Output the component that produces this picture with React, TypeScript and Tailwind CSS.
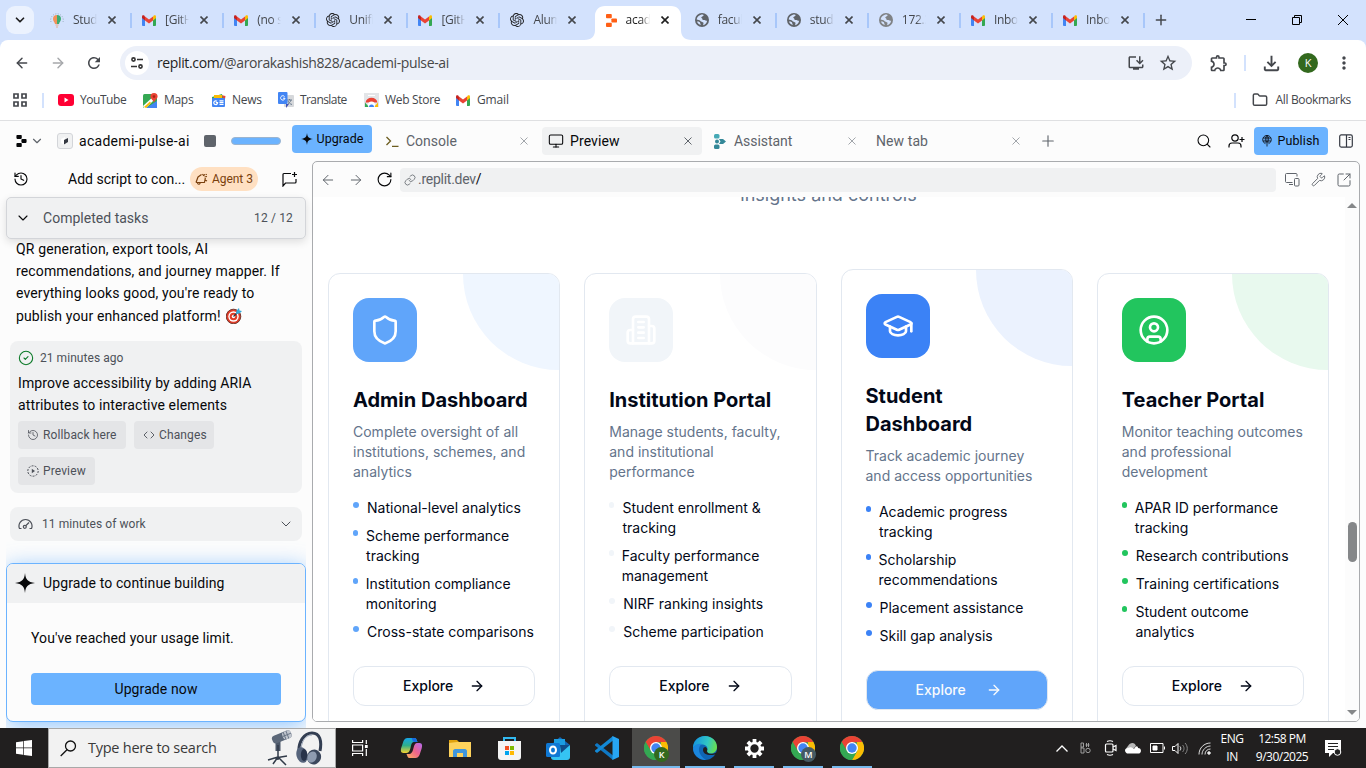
import React from "react";
import {
  ArrowLeft, ArrowRight, ChevronDown, CircleCheck, CircleUser, Code,
  Folder, GraduationCap, History, Link, Monitor, Plus, RotateCw, Search, Shield, SquareArrowOutUpRight,
  Wrench,
} from "lucide-react";
import { SiOpenai } from "react-icons/si";
import { MdOutlineFileDownload, MdStarBorder, MdOutlineExtension, MdOutlineInstallDesktop, MdRefresh, MdMoreVert } from "react-icons/md";

const SEGOE = "font-['Open_Sans',sans-serif]";
const PLEX = "font-['Roboto',sans-serif]";
const INTER = "font-['Inter',sans-serif]";

function Gmail() {
  return (
    <svg className="h-[11px] w-[14px] shrink-0" viewBox="0 0 28 22">
      <path fill="#4285f4" d="M0 5v15c0 1 1 2 2 2h4V10z" />
      <path fill="#34a853" d="M28 5v15c0 1-1 2-2 2h-4V10z" />
      <path fill="#fbbc04" d="M22 3v8l6-5V3c0-3-4-4-6 0z" />
      <path fill="#c5221f" d="M0 3v3l6 5V3C4-1 0 0 0 3z" />
      <path fill="#ea4335" d="M6 3l8 6 8-6v8l-8 6-8-6z" />
    </svg>
  );
}

function WorldIcon({ dim = false }: { dim?: boolean }) {
  return (
    <svg className="h-[14px] w-[14px] shrink-0" viewBox="0 0 14 14">
      <circle cx="7" cy="7" r="7" fill={dim ? "#7f8285" : "#5f6368"} />
      <path fill="#d3e2fd" d="M7.6 1.6c1 .1 1.3 1 .6 1.5-.7.6-1.8.6-1.9 1.4-.1.8 1.3.8 1.2 1.9 0 .8 1.3.5 2 .5 1 0 1.2 1 2.6.8-.2 2-1.700 4-3.700 4.500-.6-1 .6-1.600-.1-2.600C7.600 8.700 6 9 5.200 7.700 4.500 6.700 3 7 1.700 6.400 2 4 4.500 1.600 7.600 1.600z" />
      <path fill="#d3e2fd" d="M2 8.600c1.500-.2 3 .3 3.200 1.500.1.900.3 1.300.8 1.900-2-.2-3.500-1.600-4-3.400z" />
    </svg>
  );
}

function Bulb() {
  return (
    <svg className="h-[16px] w-[14px] shrink-0" viewBox="0 0 14 16">
      <path fill="#f2925a" d="M7 3a4 4 0 0 0-4 4c0 2 1.500 2.700 2 5h2z" />
      <path fill="#3cab72" d="M7 3a4 4 0 0 1 4 4c0 2-1.500 2.700-2 5H7z" />
      <path stroke="#e7a98c" d="M5.500 13h3M6 15h2" />
      <path stroke="#8fa3b5" strokeWidth=".9" strokeDasharray="1 1.500" fill="none" d="M1 10a6.300 6.300 0 1 1 12 0" />
    </svg>
  );
}

function Replit({ color = "#ff5f15", size = "h-[13px] w-[11px]" }: { color?: string; size?: string }) {
  return (
    <svg className={size + " shrink-0"} viewBox="0 0 11 13" fill={color}>
      <rect x="0" y="0" width="5.800" height="4.200" rx=".9" />
      <rect x="5.400" y="4.400" width="5.600" height="4.200" rx=".9" />
      <rect x="0" y="8.800" width="5.800" height="4.200" rx=".9" />
    </svg>
  );
}

function ChromeLogo() {
  return (
    <svg className="h-6 w-6" viewBox="0 0 24 24">
      <circle cx="12" cy="12" r="12" fill="#34a853" />
      <path fill="#ea4335" d="M1.600 6A12 12 0 0 1 22.400 6L12 6.500 7 15z" />
      <path fill="#fbbc04" d="M22.400 6A12 12 0 0 1 12 24l5.200-9L17 6z" />
      <path fill="#34a853" d="M1.600 6l5.200 9 10.400 0L12 24A12 12 0 0 1 1.600 6z" />
      <circle cx="12" cy="12" r="6" fill="#fff" />
      <circle cx="12" cy="12" r="4.700" fill="#4285f4" />
    </svg>
  );
}

function Spark({ className }: { className: string }) {
  return (
    <svg className={className} viewBox="0 0 20 20" fill="currentColor">
      <path d="M10 0c.7 6.500 2.500 9 10 10-7.500 1-9.300 3.500-10 10-.7-6.500-2.500-9-10-10 7.500-1 9.300-3.500 10-10z" />
    </svg>
  );
}

function TabClose({ className }: { className: string }) {
  return <svg className={"ml-auto h-2 w-2 " + className} viewBox="0 0 8 8"><path stroke="currentColor" d="M.5.5l7 7M7.500.5l-7 7" /></svg>;
}

function OfficeBuilding() {
  return (
    <svg className="h-8 w-8" viewBox="0 0 24 24" fill="none" stroke="currentColor" strokeWidth="2" strokeLinecap="round" strokeLinejoin="round">
      <path d="M6 22V4a2 2 0 0 1 2-2h8a2 2 0 0 1 2 2v18Z" />
      <path d="M6 12H4a2 2 0 0 0-2 2v6a2 2 0 0 0 2 2h2M18 9h2a2 2 0 0 1 2 2v9a2 2 0 0 1-2 2h-2M10 6h4M10 10h4M10 14h4M10 18h4" />
    </svg>
  );
}

type BTab = { icon: React.ReactNode; label: string; sep?: boolean; active?: boolean };
const browserTabs: BTab[] = [
  { icon: <Bulb />, label: "Stude" },
  { icon: <Gmail />, label: "[GitHu", sep: true },
  { icon: <Gmail />, label: "(no su", sep: true },
  { icon: <SiOpenai className="h-[14px] w-[14px] shrink-0 text-[#202124]" />, label: "Unifi", sep: true },
  { icon: <Gmail />, label: "[GitHu", sep: true },
  { icon: <SiOpenai className="h-[14px] w-[14px] shrink-0 text-[#202124]" />, label: "Alum", sep: true },
  { icon: <div className="pl-[3px]"><Replit /></div>, label: "acad", active: true },
  { icon: <WorldIcon />, label: "facul" },
  { icon: <WorldIcon />, label: "stude", sep: true },
  { icon: <WorldIcon dim />, label: "172.3", sep: true },
  { icon: <Gmail />, label: "Inbox", sep: true },
  { icon: <Gmail />, label: "Inbox", sep: true },
];

function BrowserTab({ icon, label, sep, active }: BTab) {
  return (
    <div className="relative flex h-10 w-[92.1px] shrink-0 items-center pl-3">
      {sep && <div className="absolute left-0 top-[13px] h-[15px] w-[2px] bg-[#a8c7fa]" />}
      {active && (
        <svg className="absolute -left-[7px] top-[6px] h-[34px] w-[108px]" viewBox="0 0 108 34" fill="#fff">
          <path d="M0 34c8 0 11-4 11-10V10C11 4 15 0 21 0h66c6 0 10 4 10 10v14c0 6 3 10 11 10z" />
        </svg>
      )}
      <div className="relative flex w-[14px] justify-center">{icon}</div>
      <div className={"relative -mr-px ml-[9px] w-[24px] overflow-hidden whitespace-nowrap text-[12px] tracking-[-0.3px] [mask-image:linear-gradient(to_right,#000_60%,transparent)] " + (active ? "text-[#1f1f1f]" : "text-[#44474c]")}>{label}</div>
      <svg className={"relative ml-[12px] h-[8px] w-[8px] " + (active ? "text-[#1f1f1f]" : "text-[#44474c]")} viewBox="0 0 8 8"><path stroke="currentColor" strokeWidth="1.600" d="M.5.5l7 7M7.500.5l-7 7" /></svg>
    </div>
  );
}

function BrowserChrome() {
  return (
    <header className={"shrink-0 bg-[#d3e2fd] " + SEGOE}>
      <div className="flex h-10 items-center">
        <div className="ml-[6px] flex h-7 w-7 items-center justify-center rounded-[9px] bg-[#ebf2fe]">
          <ChevronDown className="h-[14px] w-[14px] text-[#1f1f1f]" strokeWidth={3} />
        </div>
        <div className="ml-[4px] flex">
          {browserTabs.map((t, i) => <BrowserTab key={i} {...t} />)}
        </div>
        <div className="h-[15px] w-[2px] bg-[#a8c7fa]" />
        <Plus className="ml-[8px] h-4 w-4 text-[#44474c]" strokeWidth={2.2} />
        <div className="ml-auto flex items-center gap-[34px] pr-[17px] text-black">
          <svg className="h-3 w-3" viewBox="0 0 12 12"><path stroke="currentColor" d="M1 5.500h10" /></svg>
          <svg className="h-3 w-3" viewBox="0 0 12 12" fill="none" stroke="currentColor"><path d="M1.500 3.500h7v7h-7zM3.500 3.500v-2h7v7h-2" /></svg>
          <svg className="h-3 w-3" viewBox="0 0 12 12"><path stroke="currentColor" d="M1 1l10 10M11 1L1 11" /></svg>
        </div>
      </div>
      <div className="rounded-t-[8px] bg-white">
        <div className="flex h-[46px] items-center text-[#44474c]">
          <ArrowLeft className="ml-[14px] h-4 w-4" strokeWidth={2.2} />
          <ArrowRight className="ml-[20px] h-4 w-4 text-[#a6a8ab]" strokeWidth={2.2} />
          <MdRefresh className="ml-[19px] h-[18px] w-[18px]" />
          <div className="ml-[17px] flex h-[34px] w-[1072px] items-center rounded-full bg-[#ecf0f9] pl-[5px]">
            <div className="flex h-6 w-6 items-center justify-center rounded-full bg-white">
              <svg className="h-[12px] w-[12px]" viewBox="0 0 12 12" fill="none" stroke="#333" strokeWidth="1.600"><circle cx="2.500" cy="2.500" r="1.600" /><path d="M6 2.500h6M0 9.500h6" /><circle cx="9.500" cy="9.500" r="1.600" /></svg>
            </div>
            <div className="-mt-px ml-[8px] whitespace-nowrap text-[14px] tracking-[-0.37px] text-[#474747]"><span className="text-[#1f1f1f]">replit.com</span>/@arorakashish828/academi-pulse-ai</div>
            <MdOutlineInstallDesktop className="ml-auto h-[18px] w-[18px]" />
            <MdStarBorder className="ml-[13px] mr-[14px] h-[20px] w-[20px]" />
          </div>
          <MdOutlineExtension className="ml-[17px] h-[20px] w-[20px]" />
          <div className="ml-[15px] h-4 w-[2px] bg-[#d3e2fd]" />
          <MdOutlineFileDownload className="ml-[14px] h-[23px] w-[23px]" />
          <div className="ml-[15px] flex h-5 w-5 items-center justify-center rounded-full bg-[#33691e] text-[11px] text-white">K</div>
          <MdMoreVert className="ml-[16px] h-[20px] w-[20px]" />
        </div>
        <div className="flex h-[34px] items-center pb-[6px] text-[12px] tracking-[-0.15px] text-[#44474c]">
          <svg className="ml-[13px] h-[14px] w-[14px]" viewBox="0 0 14 14" fill="none" stroke="currentColor" strokeWidth="1.700"><path d="M1 1h4v4H1zM9 1h4v4H9zM1 9h4v4H1zM9 9h4v4H9z" /></svg>
          <div className="ml-[15px] mr-[14px] h-[15px] w-[2px] bg-[#d3e2fd]" />
          <div className="flex w-[85px] items-center gap-[6px] tracking-[-0.45px]">
            <svg className="h-3 w-4" viewBox="0 0 16 12"><rect width="16" height="12" rx="3" fill="#f03" /><path fill="#fff" d="M6.500 3.500v5l4-2.500z" /></svg><span>YouTube</span>
          </div>
          <div className="flex w-[68px] items-center gap-[6px] tracking-[-0.3px]">
            <svg className="h-[15px] w-[15px]" viewBox="0 0 15 15"><rect y="1" width="14" height="14" rx="1.500" fill="#34a853" /><path fill="#4285f4" d="M14 8v7H3z" /><path fill="#fff" d="M0 13L12 2l2 2L3 15H1z" /><path fill="#fbbc04" d="M1 14l6-5.500L8 10l-5 5z" /><path fill="#ea4335" d="M11 0a3.600 3.600 0 0 1 3.600 3.600C14.600 6 11.500 7 11 10 10.500 7 7.400 6 7.400 3.600A3.600 3.600 0 0 1 11 0z" /><circle cx="11" cy="3.600" r="1.300" fill="#a52714" /></svg><span>Maps</span>
          </div>
          <div className="flex w-[67px] items-center gap-[6px] tracking-[-0.3px]">
            <svg className="h-[15px] w-[15px]" viewBox="0 0 15 15"><path fill="#ea4335" d="M10 2l4.500 1-1 6H8z" /><path fill="#34a853" d="M1 4l10-3 1 5H1z" /><path fill="#fbbc04" d="M3 2h8v6H3z" /><rect x="1" y="5" width="13" height="9" rx="1" fill="#4285f4" /><path stroke="#fff" strokeWidth="1.200" fill="none" d="M6 8.300a1.900 1.900 0 1 0 .6 1.400H4.800M8.500 7.800h4M8.500 9.700h4M8.500 11.500h4" /></svg><span>News</span>
          </div>
          <div className="flex w-[86px] items-center gap-[6px]">
            <svg className="h-4 w-4" viewBox="0 0 16 16"><rect x="6" y="3" width="10" height="12" rx="1" fill="#d6d8db" /><path fill="none" stroke="#6b7d91" d="M9 8h5M11.500 7v1M13 8c-.5 2-2 3-3 4M10 9c1 2 2 3 4 3.500" /><path fill="#3f51b5" d="M8 12l3 0-3 4z" /><rect width="9.500" height="12" rx="1" fill="#4285f4" /><path stroke="#fff" fill="none" d="M6.500 4.500A2.200 2.200 0 1 0 7 6.200H5" /></svg><span className="tracking-[-0.580px]">Translate</span>
          </div>
          <div className="flex w-[92px] items-center gap-[6px] tracking-[-0.3px]">
            <svg className="h-[15px] w-[15px]" viewBox="0 0 15 15"><path fill="#e3e5e8" d="M0 0h15v14H0z" /><path fill="#fff" d="M4 2h7v1H4z" /><path fill="#ea4335" d="M1.500 9.500a6.200 6.200 0 0 1 12 0z" /><path fill="#34a853" d="M1 9.500l4 4.500H1z" /><path fill="#fbbc04" d="M14 9.500L10 14h4z" /><circle cx="7.500" cy="12" r="3.500" fill="#fff" /><path fill="#4285f4" d="M5 14a2.500 2.500 0 0 1 5 0z" /></svg><span>Web Store</span>
          </div>
          <div className="flex items-center gap-[7px]"><Gmail /><span>Gmail</span></div>
          <div className="ml-auto mr-[16px] h-[15px] w-[2px] bg-[#d3e2fd]" />
          <Folder className="h-4 w-4" strokeWidth={2.200} />
          <span className="ml-[8px] mr-[15px] tracking-[-0.35px]">All Bookmarks</span>
        </div>
      </div>
    </header>
  );
}

function WorkspaceTabs() {
  return (
    <div className={"flex h-10 shrink-0 items-center text-[14px] text-[#5f646b] " + PLEX}>
      <div className="ml-[16px]"><Replit color="#07080a" size="h-[12px] w-[11px]" /></div>
      <ChevronDown className="ml-[3px] h-[14px] w-[14px]" />
      <div className="ml-[13px] flex h-4 w-4 items-center justify-center rounded-[3px] border border-[#d3d5d9] bg-[#f0f1f2]">
        <svg className="h-[8px] w-[8px]" viewBox="0 0 8 8"><path fill="#fff" d="M0 2l4-2v8L0 6z" /><path fill="#353942" d="M3 3l4-2v4L3 7.500z" /></svg>
      </div>
      <div className="ml-[6px] w-[125px] whitespace-nowrap tracking-[0.290px] text-[#07080a]">academi-pulse-ai</div>
      <div className="h-3 w-3 rounded-[2px] bg-[#5f646b]" />
      <div className="ml-[15px] h-2 w-[50px] rounded-full border border-[#9bb4cf] bg-[#6bb3ff]" />
      <div className="-mt-1 ml-[11px] flex h-7 w-20 items-center justify-center gap-[4px] rounded-[4px] bg-[#6bb3ff] text-[12.500px] tracking-[0.040px] text-[#07080a]">
        <Spark className="h-3 w-3" />Upgrade
      </div>
      <div className="ml-[14px] flex w-[156px] items-center">
        <svg className="h-[11px] w-[13px]" viewBox="0 0 13 11" fill="none" stroke="#6b5c1e" strokeWidth="1.300"><path d="M.5 1l4 4-4 4M6 10.300h6.500" /></svg>
        <span className="ml-[7px] tracking-[0px]">Console</span>
        <TabClose className="mr-[14px] text-[#a2a6ab]" />
      </div>
      <div className="flex h-7 w-[160px] items-center rounded-[4px] bg-[#f0f1f2] text-[#07080a]">
        <Monitor className="ml-[6px] h-4 w-4" strokeWidth={1.600} />
        <span className="ml-[6px] tracking-[0.1px]">Preview</span>
        <TabClose className="mr-[10px] text-[#5f646b]" />
      </div>
      <div className="ml-[12px] flex w-[162px] items-center">
        <svg className="h-[15px] w-[12px]" viewBox="0 0 12 15" fill="#348898"><rect x="0" y="0" width="5.500" height="4.500" rx="1.500" fill="#46a9b5" /><circle cx="3" cy="7.500" r="2" /><path d="M5 5h4l3 2.500L9 10H5l1.500-2.500z" /><rect x="0" y="10.500" width="5.500" height="4.500" rx="1.500" /></svg>
        <span className="ml-[8px] tracking-[-0.050px]">Assistant</span>
        <TabClose className="mr-[20px] text-[#a2a6ab]" />
      </div>
      <div className="flex w-[156px] items-center">
        <span className="tracking-[0.080px]">New tab</span>
        <TabClose className="mr-[12px] text-[#a2a6ab]" />
      </div>
      <Plus className="ml-[7px] h-[18px] w-[18px]" strokeWidth={1.500} />
      <Search className="ml-auto h-4 w-4 text-[#07080a]" strokeWidth={1.600} />
      <svg className="ml-4 h-4 w-[17px] text-[#07080a]" viewBox="0 0 17 16" fill="none" stroke="currentColor" strokeWidth="1.200"><circle cx="7" cy="5" r="3.200" /><path d="M1 14.500v-1.500c0-2 1-3 3-3h6c2 0 3 1 3 3v1.500M14 4v5M11.500 6.500h5" /></svg>
      <div className="ml-[9px] flex h-7 w-[74px] items-center justify-center gap-[5px] rounded-[4px] bg-[#6bb3ff] text-[12.500px] tracking-[0.120px] text-[#07080a]">
        <svg className="h-[12px] w-[10px]" viewBox="0 0 10 12" fill="none" stroke="currentColor" strokeWidth=".8"><path d="M3.500 8.700A4.300 4.300 0 1 1 6.500 8.700M1 3h8M1 6h8M5 .5v11M5 .5C3 2 3 5.500 3.700 6.500M5 .5c2 1.500 2 5 1.300 6M3.500 8L5 6.300 6.500 8" /></svg>Publish
      </div>
      <svg className="ml-[11px] mr-[13px] h-[14px] w-[14px]" viewBox="0 0 14 14" fill="none" stroke="#353942" strokeWidth="1.200"><rect x=".7" y=".9" width="12.600" height="12.200" rx="1.500" /><path d="M7.500 1v12M9.500 3.500h2M9.500 5.500h2" /></svg>
    </div>
  );
}

function SmallButton({ icon, children, className }: { icon: React.ReactNode; children: string; className: string }) {
  return <div className={"flex h-7 items-center gap-[4px] rounded-[4px] bg-[#e4e5e7] pl-[9px] text-[12px] tracking-[0.120px] text-[#4d5159] " + className}>{icon}{children}</div>;
}

function Target() {
  return (
    <svg className="ml-[5px] inline-block h-[16px] w-[16px] align-[-3px]" viewBox="0 0 16 16">
      <circle cx="7.500" cy="8.500" r="7.300" fill="#e03c28" stroke="#54231c" strokeWidth=".8" /><circle cx="7.500" cy="8.500" r="5.200" fill="#fff" /><circle cx="7.500" cy="8.500" r="3.800" fill="#e03c28" /><circle cx="7.500" cy="8.500" r="1.700" fill="#fff" />
      <path stroke="#243642" strokeWidth="1.200" d="M7.500 8.500L13 3" /><path fill="#35a9d8" d="M10 6l.5-3.500L13 0l.5 2.500L16 3l-2.500 2.500z" />
    </svg>
  );
}

function AgentPanel() {
  return (
    <aside className={"flex w-[312px] shrink-0 flex-col pl-[6px] pr-[6px] text-[#07080a] " + PLEX}>
      <div className="flex h-9 items-center">
        <History className="ml-[7px] h-4 w-4" strokeWidth={1.700} />
        <span className="ml-[39px] w-[122px] whitespace-nowrap text-[14px] tracking-[0.010px]">Add script to con...</span>
        <div className="flex h-6 w-[68px] items-center rounded-full bg-[#ffe0c2] pl-[5px] text-[12px] tracking-[-0.050px] text-[#7a3f0c]">
          <svg className="mr-[4px] h-[12px] w-[13px]" viewBox="0 0 13 12" fill="none" stroke="currentColor" strokeWidth="1.200" strokeLinejoin="round"><path d="M1 9.500L3 4l3.500-2.500M1 9.500h8.500l.8-4.500M2.500 10c.3 1.500 2 1.800 2.700 0M7.500 1l1 1.500 1.500-1M9.500 4l2.500-.5M11 2l.5-1M10 7l2 1" /></svg>Agent 3
        </div>
        <svg className="ml-auto mr-[8px] h-4 w-4" viewBox="0 0 16 16" fill="none" stroke="currentColor" strokeWidth="1.200"><path d="M9 2.500H2c-.7 0-1 .5-1 1V15l2.500-3H13c.7 0 1-.5 1-1V8M12.500 1v5M10 3.500h5" /></svg>
      </div>
      <div className="relative z-10 flex h-[42px] shrink-0 items-center rounded-[5px] border border-[#d3d5d9] bg-[#f0f1f2] shadow-[0_3px_8px_rgba(0,0,0,0.12)]">
        <ChevronDown className="ml-[8px] h-4 w-4" strokeWidth={1.700} />
        <span className="ml-[12px] text-[14px] tracking-[0.020px] text-[#4d5159]">Completed tasks</span>
        <span className="ml-auto mr-[12px] text-[12px] tracking-[0.160px] text-[#4d5159]">12 / 12</span>
      </div>
      <p className="-mt-[1.500px] ml-[10px] whitespace-nowrap text-[14px] leading-[22.400px] tracking-[0.140px]">QR generation, export tools, AI<br />recommendations, and journey mapper. If<br />everything looks good, you're ready to<br />publish your enhanced platform!<Target /></p>
      <div className="ml-[4px] mt-[13.500px] h-[152px] w-[292px] shrink-0 rounded-[8px] bg-[#f0f1f2] px-[8px] pt-[6px]">
        <div className="flex h-[22px] items-center gap-[6px] text-[12px] tracking-[0.050px] text-[#4d5159]"><CircleCheck className="h-4 w-4 text-[#0b7a28]" strokeWidth={1.600} />21 minutes ago</div>
        <p className="mt-[3px] whitespace-nowrap text-[14px] leading-[22.400px] tracking-[0.130px]">Improve accessibility by adding ARIA<br />attributes to interactive elements</p>
        <div className="mt-[5px] flex flex-wrap gap-2">
          <SmallButton className="w-[108px]" icon={<History className="h-3 w-3" strokeWidth={1.600} />}>Rollback here</SmallButton>
          <SmallButton className="w-[80px]" icon={<Code className="h-3 w-3" strokeWidth={1.800} />}>Changes</SmallButton>
          <SmallButton className="w-[77px]" icon={<svg className="h-3 w-3" viewBox="0 0 12 12"><circle cx="6" cy="6" r="5.200" fill="none" stroke="currentColor" strokeDasharray="2 1.200" /><path fill="currentColor" d="M4.800 3.800v4.400L8 6z" /></svg>}>Preview</SmallButton>
        </div>
      </div>
      <div className="ml-[4px] mt-[14px] flex h-[34px] w-[292px] shrink-0 items-center rounded-[8px] bg-[#f0f1f2] px-[8px] text-[12px] text-[#4d5159]">
        <svg className="mr-[9px] h-[15px] w-[15px]" viewBox="0 0 15 15" fill="none" stroke="currentColor" strokeWidth="1.200"><path d="M3.500 12.500H1.500a6.500 6.500 0 1 1 12 0h-2M8 9.500l3-3" /><circle cx="6.800" cy="10.800" r="1.500" /></svg>
        <span className="tracking-[0.060px]">11 minutes of work</span><ChevronDown className="ml-auto h-4 w-4" strokeWidth={1.500} />
      </div>
      <div className="flex flex-1 flex-col overflow-hidden pb-[6px] pt-[22px]">
        <div className="flex flex-1 flex-col rounded-[7px] border border-[#6bb3ff] bg-[#fcfcfc] shadow-[0_4px_22px_rgba(107,179,255,0.750)]">
          <div className="flex h-[39px] items-center rounded-t-[6px] bg-[#f0f1f2] pl-[8px]"><Spark className="h-5 w-5" /><span className="ml-[8px] text-[14px] tracking-[0.120px]">Upgrade to continue building</span></div>
          <div className="flex flex-1 flex-col px-6 pt-[25px] text-[14px] tracking-[0.100px]">
            You've reached your usage limit.
            <div className="mt-auto mb-[16px] flex h-8 items-center justify-center rounded-[4px] bg-[#6bb3ff]">Upgrade now</div>
          </div>
        </div>
      </div>
    </aside>
  );
}

type Portal = { title: string; desc: string; items: string[]; icon: React.ReactNode; box: string; arc: string; dot: string; lifted?: boolean };
const portals: Portal[] = [
  { title: "Admin Dashboard", desc: "Complete oversight of all institutions, schemes, and analytics", items: ["National-level analytics", "Scheme performance tracking", "Institution compliance monitoring", "Cross-state comparisons"], icon: <Shield className="h-8 w-8" />, box: "bg-[#60a5fa]", arc: "bg-[#eff6ff]", dot: "bg-[#60a5fa]" },
  { title: "Institution Portal", desc: "Manage students, faculty, and institutional performance", items: ["Student enrollment & tracking", "Faculty performance management", "NIRF ranking insights", "Scheme participation"], icon: <OfficeBuilding />, box: "bg-[#f1f5f9]", arc: "bg-[#fcfcfd]", dot: "bg-[#f1f5f9]" },
  { title: "Student Dashboard", desc: "Track academic journey and access opportunities", items: ["Academic progress tracking", "Scholarship recommendations", "Placement assistance", "Skill gap analysis"], icon: <GraduationCap className="h-8 w-8" />, box: "bg-[#3b82f6]", arc: "bg-[#ebf2fe]", dot: "bg-[#3b82f6]", lifted: true },
  { title: "Teacher Portal", desc: "Monitor teaching outcomes and professional development", items: ["APAR ID performance tracking", "Research contributions", "Training certifications", "Student outcome analytics"], icon: <CircleUser className="h-8 w-8" />, box: "bg-[#22c55e]", arc: "bg-[#e8f9ee]", dot: "bg-[#22c55e]" },
];

function PortalCard({ title, desc, items, icon, box, arc, dot, lifted }: Portal) {
  return (
    <article className={"relative h-[480px] overflow-hidden rounded-xl border border-[#e2e8f0] bg-white p-6 text-sm " + (lifted ? "-mt-1" : "")}>
      <div className={"absolute right-0 top-0 h-24 w-24 rounded-bl-full " + arc} />
      <div className={"relative flex h-16 w-16 items-center justify-center rounded-2xl text-white " + box}>{icon}</div>
      <h3 className="mt-6 text-xl font-bold leading-7 text-[#020817]">{title}</h3>
      <p className="mt-2 leading-5 text-[#64748b]">{desc}</p>
      <ul className="mt-4 flex flex-col gap-2 text-[#020817]">
        {items.map((it) => <li key={it} className="flex"><span className={"mr-2 mt-1 h-1.5 w-1.5 rounded-full " + dot} /><span className="leading-5">{it}</span></li>)}
      </ul>
      <div className={"mt-6 flex h-10 items-center justify-center gap-4 rounded-xl border border-[#e2e8f0] font-medium " + (lifted ? "bg-[#60a5fa] text-[#f8fafc]" : "text-[#020817]")}>Explore<ArrowRight className={"h-4 w-4 " + (lifted ? "translate-x-1" : "")} /></div>
    </article>
  );
}

function PreviewPane() {
  return (
    <main className="mb-[6px] mr-[6px] flex min-w-0 flex-1 flex-col overflow-hidden rounded-[5px] border border-[#a9abae] bg-[#fcfcfc]">
      <div className={"flex h-[35px] shrink-0 items-center text-[14px] text-[#5f646b] " + PLEX}>
        <ArrowLeft className="ml-[7px] h-4 w-4" strokeWidth={1.500} />
        <ArrowRight className="ml-[12px] h-4 w-4" strokeWidth={1.500} />
        <RotateCw className="ml-[12px] h-[17px] w-[17px] text-[#07080a]" strokeWidth={1.600} />
        <div className="ml-[7px] flex h-6 w-[876px] items-center rounded-[4px] bg-[#f0f1f2] pl-[4px]"><Link className="mr-[2px] h-3 w-3" strokeWidth={1.600} /><span className="tracking-[-0.260px]">.replit.dev<b className="font-normal text-[#07080a]">/</b></span></div>
        <svg className="ml-[9px] h-[15px] w-[15px]" viewBox="0 0 15 15" fill="none" stroke="currentColor"><path d="M7.500 10.500h-6c-.6 0-1-.4-1-1v-7c0-.6.4-1 1-1H11c.6 0 1 .4 1 1v2M4 12.500h4" /><rect x="9.500" y="6.500" width="4.500" height="7.500" rx="1" /></svg>
        <Wrench className="ml-[11px] h-[15px] w-[15px]" strokeWidth={1.500} />
        <SquareArrowOutUpRight className="ml-[10px] h-[16px] w-[16px]" strokeWidth={1.500} />
      </div>
      <div className="flex min-h-0 flex-1">
        <section className={"flex w-[1032px] flex-col overflow-hidden bg-white pl-[15px] " + INTER}>
          <div className="flex h-[76px] w-[1001px] shrink-0 justify-center overflow-hidden"><span className="-mt-[16px] text-[18px] leading-7 text-[#64748b]">insights and controls</span></div>
          <div className="grid w-[1001px] grid-cols-4 gap-6">{portals.map((p) => <PortalCard key={p.title} {...p} />)}</div>
        </section>
        <div className="flex flex-1 flex-col items-center bg-[#fcfcfc]">
          <svg className="mt-[6px] h-[5px] w-[10px]" viewBox="0 0 10 5"><path fill="#858789" d="M0 5l5-5 5 5z" /></svg>
          <div className="mt-[314px] h-[40px] w-[9px] rounded-full bg-[#858789]" />
          <svg className="mb-[6px] mt-auto h-[5px] w-[10px]" viewBox="0 0 10 5"><path fill="#858789" d="M0 0h10L5 5z" /></svg>
        </div>
      </div>
    </main>
  );
}

function Badge({ letter, color }: { letter: string; color: string }) {
  return <span className={"absolute left-[10px] top-[11px] flex h-[15px] w-[15px] items-center justify-center rounded-full text-[9px] font-semibold text-white " + color}>{letter}</span>;
}

function TaskItem({ children, open, focused }: { children: React.ReactNode; open?: boolean; focused?: boolean }) {
  return (
    <div className={"relative flex h-10 w-12 items-center justify-center " + (focused ? "bg-[#4b4b49]" : "")}>
      <div className="relative">{children}</div>
      {open && <div className={"absolute bottom-0 h-[2px] bg-[#76b9ed] " + (focused ? "w-12" : "w-10")} />}
    </div>
  );
}

function Taskbar() {
  return (
    <footer className={"flex h-10 shrink-0 items-center bg-[#211f1f] text-white " + SEGOE}>
      <div className="flex w-12 justify-center"><svg className="h-4 w-4" viewBox="0 0 16 16" fill="#fff"><path d="M0 2.200L7 1.200v6.300H0zM7.700 1.100L16 0v7.500H7.700zM0 8.300h7v6.500L0 13.800zM7.700 8.300H16V16l-8.300-1.100z" /></svg></div>
      <div className="flex h-10 w-72 items-center border border-[#a8a8a8] bg-[#f2f2f2] text-[#3a3a3a]">
        <svg className="ml-[11px] h-[17px] w-[17px]" viewBox="0 0 17 17" fill="none" stroke="#111" strokeWidth="1.300"><circle cx="10.500" cy="6" r="5" /><path d="M7 9.700L.7 16" /></svg>
        <span className="ml-[11px] whitespace-nowrap text-[14.500px] tracking-[-0.25px]">Type here to search</span>
        <svg className="ml-auto h-[36px] w-[26px]" viewBox="0 0 26 36"><path stroke="#4b5768" strokeWidth="5" d="M11 10v11" /><path stroke="#303a48" strokeWidth="1.500" fill="none" d="M11 15v15M11 27L1 30M11 27l8 8M11 27l-5 7M8 28l12-2" /><g transform="rotate(-22 12 8)"><rect x="5" y="4" width="20" height="8" rx="3" fill="#5c6879" /><rect x="16" y="4" width="9" height="8" rx="3" fill="#c1c6ce" /><path stroke="#697586" d="M18 4v8M21 4v8M16 8h9" /></g></svg>
        <svg className="ml-[2px] mr-[12px] h-[34px] w-[28px]" viewBox="0 0 28 34"><path fill="none" stroke="#333e52" strokeWidth="3" d="M4 22C3 11 9 2 17 2c8 0 10 8 8 18" /><path fill="none" stroke="#9aa5b8" d="M6 18C7 9 11 4 17 4" /><ellipse cx="7" cy="24" rx="5.500" ry="8" fill="#56647c" transform="rotate(-15 7 24)" /><ellipse cx="9" cy="24" rx="3.200" ry="6" fill="#28334a" /><ellipse cx="19" cy="26" rx="7" ry="7.500" fill="#3b475c" transform="rotate(25 19 26)" /><ellipse cx="17" cy="26" rx="4.500" ry="5.800" fill="#8e9bb0" transform="rotate(25 17 26)" /></svg>
      </div>
      <div className="flex w-12 justify-center"><svg className="h-4 w-4" viewBox="0 0 16 16" fill="none" stroke="#fff" strokeWidth="1.200"><path d="M.6 0v2.500h10V0M.6 5h10v6H.6zM.6 16v-2.500h10V16M14.300 0v4M14.300 9v7" /><path fill="#fff" d="M13.500 5.500h1.600v2h-1.600z" /></svg></div>
      <div className="ml-[3px] flex items-center gap-[1px]">
        <TaskItem><svg className="h-[22px] w-[23px]" viewBox="0 0 22 22"><defs><linearGradient id="cop1" x1=".2" y1="0" x2=".2" y2="1"><stop stopColor="#17a6e8" /><stop offset=".5" stopColor="#2fae8b" /><stop offset="1" stopColor="#f5d32f" /></linearGradient><linearGradient id="cop2" x1="1" y1="0" x2="0" y2="1"><stop stopColor="#b36af0" /><stop offset=".5" stopColor="#f0648a" /><stop offset="1" stopColor="#ffb35c" /></linearGradient></defs><path fill="url(#cop1)" d="M7 1h7c2 0 2 2 3 4h-3c-3 0-3 2-4 6s-2 5-5 5H3c-3 0-3-3-2-6l2-6c1-2 2-3 4-3z" /><path fill="url(#cop2)" d="M15 21H9c-2 0-2-2-3-4h2c3 0 4-2 5-6s2-5 4-5h2c3 0 3 3 2 6l-2 6c-1 2-2 3-4 3z" /><path fill="#1769e0" d="M11 1h3c2 0 2 2 3 4h-3c-2 0-2-3-3-4z" /></svg></TaskItem>
        <TaskItem><svg className="h-[19px] w-[22px]" viewBox="0 0 22 19"><path fill="#e0a20e" d="M0 1h8l2 2v3H0z" /><path fill="#fdd25c" d="M0 4l8-1h14v15H0z" /><path fill="#3f96dc" d="M4 18v-6c0-1 1-2 2-2h10c1 0 2 1 2 2v6h-4v-4H8v4z" /></svg></TaskItem>
        <TaskItem><svg className="h-6 w-[23px]" viewBox="0 0 23 24"><path fill="none" stroke="#32b9f0" strokeWidth="2" d="M6 6V2h11v4" /><path fill="#f4f4f4" d="M0 5h23v16c0 2-1 3-3 3H3c-2 0-3-1-3-3z" /><path fill="#f25022" d="M7 10h4v4H7z" /><path fill="#7fba00" d="M12 10h4v4h-4z" /><path fill="#00a4ef" d="M7 15h4v4H7z" /><path fill="#ffb900" d="M12 15h4v4h-4z" /></svg></TaskItem>
        <TaskItem><svg className="h-[23px] w-6" viewBox="0 0 24 23"><path fill="#1266b5" d="M5 8l9-8 10 8v5H5z" /><path fill="#1b9de2" d="M8 2h11v11H8z" /><path fill="#35c4f2" d="M5 13l19-5v12c0 2-1 3-3 3H8c-2 0-3-1-3-3z" /><path fill="#0f4d8a" d="M14 8l10 0-9 8z" /><rect y="6" width="14" height="14" rx="1.500" fill="#0f78d4" /><ellipse cx="7" cy="13" rx="3" ry="3.500" stroke="#fff" strokeWidth="2" fill="none" /></svg></TaskItem>
        <TaskItem><svg className="h-6 w-6" viewBox="0 0 24 24"><path fill="#0f78c4" d="M0 8.500L2 7l16 12.500V24L0 9.500z" /><path fill="#1389d6" d="M0 15.500L2 17 18 4.500V0L0 14.500z" /><path fill="#27a5f3" d="M17.500 0L24 3v18l-6.500 3z" /></svg></TaskItem>
        <TaskItem open focused><ChromeLogo /><Badge letter="K" color="bg-[#33691e]" /></TaskItem>
        <TaskItem open><svg className="h-6 w-6" viewBox="0 0 24 24"><defs><linearGradient id="edge" x1="0" y1=".3" x2="1" y2=".5"><stop stopColor="#1492df" /><stop offset=".6" stopColor="#31c7c4" /><stop offset="1" stopColor="#69df4e" /></linearGradient></defs><circle cx="12" cy="12" r="12" fill="#0f65b5" /><path fill="url(#edge)" d="M0 12C0 5 5 0 12 0c7 0 12 5 12 11 0 4-3 6.500-6 6.500s-4.500-1-4-3c1-1 1-5-4-6C6 8 2 9 0 12z" /><path fill="#1b86dd" d="M0 12c2-4 6-5 9-4-5 3-4 11 4 16C5 24 0 18 0 12z" /><path fill="#211f1f" d="M10 14c0-2 1-3 2.500-3 2 1 2 3 1.500 4 0 3 5 4 9.500 1.300L24 18v1l-1.500-.5C20 19 19 19 18 19c-5 0-8-2-8-5z" /></svg></TaskItem>
        <TaskItem open><svg className="h-[19px] w-[19px]" viewBox="0 0 20 20"><path stroke="#fff" strokeWidth="4" d="M10 0v4M10 16v4M0 10h4M16 10h4M3 3l3 3M14 14l3 3M3 17l3-3M14 6l3-3" /><circle cx="10" cy="10" r="5.800" fill="#211f1f" stroke="#fff" strokeWidth="2.800" /></svg></TaskItem>
        <TaskItem open><ChromeLogo /><Badge letter="M" color="bg-[#455a64]" /></TaskItem>
        <TaskItem open><ChromeLogo /></TaskItem>
      </div>
      <svg className="ml-auto h-[7px] w-[12px]" viewBox="0 0 12 7" fill="none" stroke="#fff" strokeWidth="1.300"><path d="M.5 6.500L6 1l5.500 5.500" /></svg>
      <svg className="ml-[12px] h-3 w-[11px]" viewBox="0 0 11 12" fill="none" stroke="#aaa" strokeWidth=".9"><path d="M1 1v10M1 1h2.500v4H1M1 6h3v5H1M6.500 1v4M5.500 3h4M8.500 1v4" /><circle cx="8" cy="8.500" r="2.200" /></svg>
      <svg className="ml-[13px] h-4 w-[14px]" viewBox="0 0 14 16" fill="none" stroke="#fff" strokeWidth="1.200"><rect x="1.500" y="4" width="7.500" height="8" rx="1" /><path d="M9 7l3-1.500v5L9 9M3 1.500c2-1 4-1 6 0M3 14.500c2 1 4 1 6 0" /></svg>
      <svg className="ml-[7px] h-[11px] w-4" viewBox="0 0 16 11"><path fill="#b9b9b9" d="M4 10a4 4 0 0 1-1-7C5-1 10-1 11 3z" /><path fill="#fff" d="M2 10.500C-1 9-.5 5 3 5c3-2 5 0 6 1 2-4 4-3 4-1 4 0 3.500 5 1 5.500z" /></svg>
      <svg className="ml-[9px] h-[10px] w-[15px]" viewBox="0 0 15 10" fill="none" stroke="#fff"><path d="M.5.5h12.500v9H.5z" /><path fill="#fff" d="M3 3h4v4H3zM14.500 3.500v3" /></svg>
      <svg className="ml-[7px] h-[13px] w-4" viewBox="0 0 16 13" fill="none" stroke="#fff"><path d="M.5 4.500H3l3-3v10l-3-3H.5zM8 4.500c1 1 1 3 0 4" /><path stroke="#888" d="M10.500 3c2 2 2 5 0 7M13 1c3 3 3 8 0 11" /></svg>
      <svg className="ml-[10px] h-[13px] w-[13px]" viewBox="0 0 13 13" fill="none" stroke="#ddd"><path d="M1 12.500C1 6 6 1 12.500 1M4 12.500C4 8 8 4 12.500 4M7 12.500C7 9 9.500 7 12.500 7" /><circle cx="11" cy="11" r="1.300" fill="#fff" /></svg>
      <div className="ml-[9px] w-[24px] whitespace-nowrap text-center text-[12px] leading-[18px] tracking-[-0.5px]">ENG<br />IN</div>
      <div className="ml-[11px] w-[54px] whitespace-nowrap text-center text-[12px] leading-[18px] tracking-[-0.500px]"><span className="-ml-2 -mr-2">12:58 PM</span><br /><span className="-ml-2 -mr-2">9/30/2025</span></div>
      <svg className="ml-[16px] mr-[24px] h-[17px] w-[17px]" viewBox="0 0 17 17"><path fill="#fff" d="M0 0h16v13H8l-4 4v-4H0z" /><path stroke="#222" d="M3 3.500h10M3 6.500h10M3 9.500h6" /><circle cx="12.500" cy="12" r="3.300" fill="#222" stroke="#fff" /></svg>
    </footer>
  );
}

export default function App() {
  return (
    <div className="flex h-[768px] w-[1366px] flex-col overflow-hidden bg-[#fcfcfc]">
      <BrowserChrome />
      <div className="flex min-h-0 flex-1 flex-col border-t border-[#dfe0e2]">
        <WorkspaceTabs />
        <div className="flex min-h-0 flex-1">
          <AgentPanel />
          <PreviewPane />
        </div>
      </div>
      <Taskbar />
    </div>
  );
}
